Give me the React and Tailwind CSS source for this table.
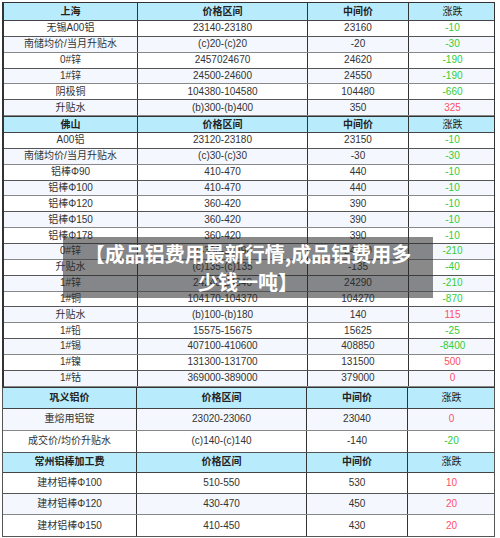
import React from "react";

const G = "text-[#33cc33]";
const R = "text-[#ff4f64]";

const sh = [
  ["无锡A00铝", "23140-23180", "23160", "-10", G],
  ["南储均价/当月升贴水", "(c)20-(c)20", "-20", "-30", G],
  ["0#锌", "2457024670", "24620", "-190", G],
  ["1#锌", "24500-24600", "24550", "-190", G],
  ["阴极铜", "104380-104580", "104480", "-660", G],
  ["升贴水", "(b)300-(b)400", "350", "325", R],
];
const fs = [
  ["A00铝", "23120-23180", "23150", "-10", G],
  ["南储均价/当月升贴水", "(c)30-(c)30", "-30", "-30", G],
  ["铝棒Φ90", "410-470", "440", "-10", G],
  ["铝棒Φ100", "410-470", "440", "-10", G],
  ["铝棒Φ120", "360-420", "390", "-10", G],
  ["铝棒Φ150", "360-420", "390", "-10", G],
  ["铝棒Φ178", "360-420", "390", "-10", G],
  ["0#锌", "24390-24490", "24440", "-210", G],
  ["升贴水", "(c)135-(c)135", "-135", "-40", G],
  ["1#锌", "24240-24340", "24290", "-210", G],
  ["1#铜", "104170-104370", "104270", "-870", G],
  ["升贴水", "(b)100-(b)180", "140", "115", R],
  ["1#铅", "15575-15675", "15625", "-25", G],
  ["1#锡", "407100-410600", "408850", "-8400", G],
  ["1#镍", "131300-131700", "131500", "500", R],
  ["1#钴", "369000-389000", "379000", "0", R],
];
const gy = [
  ["重熔用铝锭", "23020-23060", "23040", "0", R],
  ["成交价/均价升贴水", "(c)140-(c)140", "-140", "-20", G],
];
const cz = [
  ["建材铝棒Φ100", "510-550", "530", "10", R],
  ["建材铝棒Φ120", "430-470", "450", "20", R],
  ["建材铝棒Φ150", "410-450", "430", "20", R],
];

function Header({ name, h, top }) {
  return (
    <div
      className={`grid grid-cols-[134px_170px_101px_87px] bg-[#b8ecfc] border-b border-[#444] ${h} ${top}`}
    >
      <div className="flex items-center justify-center font-bold text-[#222] border-r border-[#333]">{name}</div>
      <div className="flex items-center justify-center font-bold text-[#222] border-r border-[#333]">价格区间</div>
      <div className="flex items-center justify-center font-bold text-[#222] border-r border-[#333]">中间价</div>
      <div className="flex items-center justify-center text-[#222]">涨跌</div>
    </div>
  );
}

function Row({ r, i, h }) {
  const bg = i % 2 === 0 ? "bg-white" : "bg-[#f4f8fe]";
  const line = i % 2 === 0 ? "border-[#555]" : "border-[#888]";
  return (
    <div className={`grid grid-cols-[134px_170px_101px_87px] border-b ${line} ${bg} ${h}`}>
      <div className="flex items-center justify-center text-[#333] border-r border-[#333]">{r[0]}</div>
      <div className="flex items-center justify-center text-[#333] border-r border-[#333]">{r[1]}</div>
      <div className="flex items-center justify-center text-[#333] border-r border-[#333]">{r[2]}</div>
      <div className={`flex items-center justify-center ${r[4]}`}>{r[3]}</div>
    </div>
  );
}

export default function App() {
  return (
    <div className="relative w-[500px] h-[538px] bg-white overflow-hidden text-[10px] leading-none font-['Liberation_Sans','Noto_Sans_CJK_SC',sans-serif]">
      <div className="pl-[2px] pt-[2px] flex flex-col w-[495px]">
        <div className="flex flex-col border-l-2 border-t border-r border-[#333]">
          <Header name="上海" h="h-[18px]" top="" />
          {sh.map((r, i) => (
            <Row key={"s" + i} r={r} i={i} h="h-[15.85px]" />
          ))}
          <Header name="佛山" h="h-[17px]" top="border-t border-t-[#333]" />
          {fs.map((r, i) => (
            <Row key={"f" + i} r={r} i={i} h="h-[15.85px]" />
          ))}
        </div>
        <div className="flex flex-col border-l border-r border-[#555] border-t border-t-[#333]">
          <Header name="巩义铝价" h="h-[21px]" top="" />
          {gy.map((r, i) => (
            <Row key={"g" + i} r={r} i={i + 1} h="h-[22px]" />
          ))}
          <Header name="常州铝棒加工费" h="h-[20px]" top="" />
          {cz.map((r, i) => (
            <Row key={"c" + i} r={r} i={i} h="h-[21.4px]" />
          ))}
        </div>
      </div>
      <div className="absolute left-[63px] top-[237px] w-[370px] h-[61px] bg-[rgba(40,40,40,0.55)] flex items-center justify-center px-3">
        <p className="text-white font-bold text-[20px] leading-[28px] text-center font-['Noto_Sans_CJK_SC',sans-serif]">
          【成品铝费用最新行情,成品铝费用多少钱一吨】
        </p>
      </div>
    </div>
  );
}
